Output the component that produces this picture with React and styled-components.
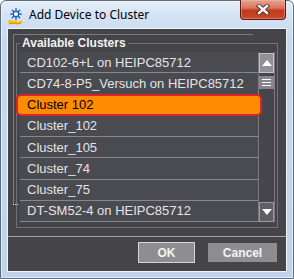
import React from "react";
import styled, { createGlobalStyle } from "styled-components";

const GlobalStyle = createGlobalStyle`
  html, body {
    margin: 0;
    padding: 0;
    background: #ffffff;
  }
  body {
    font-family: "Liberation Sans", Arial, sans-serif;
  }
`;

const Window = styled.div`
  box-sizing: border-box;
  width: 294px;
  height: 279px;
  display: flex;
  flex-direction: column;
  padding: 0 6px 6px 6px;
  border: 1px solid #5d6d80;
  border-radius: 6px 6px 0 0;
  background: linear-gradient(#e6eff9 0px, #d4e3f4 14px, #c6d9ef 40px, #bfd4ec 100%);
  box-shadow: inset 0 0 0 1px rgba(255, 255, 255, 0.55);
`;

const TitleBar = styled.div`
  height: 27px;
  display: flex;
  align-items: center;
`;

const AppIcon = styled.svg`
  width: 16px;
  height: 17px;
  margin-left: 1px;
  margin-top: 3px;
  flex: none;
`;

const Title = styled.div`
  margin-left: 5px;
  font-family: "Noto Sans", "Liberation Sans", sans-serif;
  font-size: 12px;
  color: #000;
  flex: 1;
`;

const CloseButton = styled.div`
  box-sizing: border-box;
  align-self: flex-start;
  margin-top: -1px;
  margin-right: 1px;
  width: 46px;
  height: 20px;
  border: 1px solid #5e1a10;
  border-top: none;
  border-radius: 0 0 4px 4px;
  background: linear-gradient(#e6a293 0%, #d8765f 42%, #c2391d 55%, #c54a2c 100%);
  box-shadow: inset 0 0 0 1px rgba(255, 200, 185, 0.35);
  display: flex;
  align-items: center;
  justify-content: center;
`;

const Client = styled.div`
  flex: 1;
  display: flex;
  flex-direction: column;
  background: #444449;
  border: 1px solid #eef4fb;
`;

const Panel = styled.div`
  position: relative;
  height: 207px;
  border-bottom: 1px solid #a3a3a9;
  display: flex;
  flex-direction: column;

  &::before {
    content: "";
    position: absolute;
    left: 5px;
    top: 5px;
    width: 239px;
    height: 170px;
    border-top: 1px solid #7a7a82;
    border-left: 1px solid #7a7a82;
  }
  &::after {
    content: "";
    position: absolute;
    left: 5px;
    top: 175px;
    width: 5px;
    height: 1px;
    border-top: 1px dotted #e0e0e0;
  }
`;

const Group = styled.fieldset`
  margin: 7px 8px 8px 8px;
  padding: 2px 2px 5px 3px;
  border: 1px solid #707078;
  min-width: 0;
  position: relative;
  z-index: 1;
`;

const Legend = styled.legend`
  padding: 0 2px;
  margin: 0;
  font-weight: bold;
  font-size: 12px;
  line-height: 14px;
  color: #f2f2f2;
`;

const ListBox = styled.div`
  height: 170px;
  display: flex;
`;

const Rows = styled.div`
  flex: 1;
  display: flex;
  flex-direction: column;
`;

const Row = styled.div`
  box-sizing: border-box;
  height: 21.25px;
  padding-left: 7px;
  display: flex;
  align-items: center;
  font-size: 13px;
  color: ${({ $selected }) => ($selected ? "#000" : "#e4e4e6")};
  background: #4a4a51;
  border-bottom: 1px solid #86868e;
  white-space: nowrap;
  position: relative;
  z-index: ${({ $selected }) => ($selected ? 2 : "auto")};

  ${({ $selected }) =>
    $selected &&
    `
    &::before {
      content: "";
      position: absolute;
      inset: -1px -4px -1px -4px;
      border: 2px solid #d8222c;
      border-radius: 5px;
      background: #ff8c00;
      z-index: -1;
    }
  `}
`;

const ScrollBar = styled.div`
  box-sizing: border-box;
  width: 17px;
  border-left: 1px solid #7a7a82;
  border-right: 1px solid #7a7a82;
  display: flex;
  flex-direction: column;
  background: #45454b;
`;

const ScrollButton = styled.div`
  box-sizing: border-box;
  height: 20px;
  margin-top: ${({ $down }) => ($down ? "auto" : "1px")};
  background: ${({ $down }) => ($down ? "#5e5e64" : "#909096")};
  border: 1px solid ${({ $down }) => ($down ? "#98989e" : "#c4c4ca")};
  display: flex;
  align-items: center;
  justify-content: center;
`;

const Arrow = styled.div`
  width: 0;
  height: 0;
  border-left: 5px solid transparent;
  border-right: 5px solid transparent;
  ${({ $down }) =>
    $down ? "border-top: 6px solid #ffffff;" : "border-bottom: 6px solid #ffffff;"}
`;

const Thumb = styled.div`
  box-sizing: border-box;
  height: 13px;
  margin: 3px 0 0 0;
  background: #86868c;
  display: flex;
  flex-direction: column;
  justify-content: center;
  gap: 2px;
  padding: 0 3px;
`;

const Grip = styled.div`
  height: 1px;
  background: #ffffff;
`;

const Footer = styled.div`
  flex: 1;
  display: flex;
  justify-content: flex-end;
  align-items: flex-start;
  gap: 14px;
  padding: 6px 9px 0 0;
`;

const DialogButton = styled.div`
  box-sizing: border-box;
  width: ${({ $w }) => $w}px;
  height: 19px;
  background: #8e8e92;
  color: #f4f4f4;
  font-weight: bold;
  font-size: 12px;
  display: flex;
  align-items: center;
  justify-content: center;
  outline: ${({ $focused }) => ($focused ? "1px solid #d6d6d8" : "none")};
`;

const items = [
  "CD102-6+L on HEIPC85712",
  "CD74-8-P5_Versuch on HEIPC85712",
  "Cluster 102",
  "Cluster_102",
  "Cluster_105",
  "Cluster_74",
  "Cluster_75",
  "DT-SM52-4 on HEIPC85712",
];

export default function App() {
  return (
    <>
      <GlobalStyle />
      <Window>
        <TitleBar>
          <AppIcon viewBox="0 0 16 17">
            <g stroke="#1f63cf" strokeWidth="1.5" strokeLinecap="round">
              <line x1="8" y1="0.8" x2="8" y2="11.2" />
              <line x1="2.8" y1="6" x2="13.2" y2="6" />
              <line x1="4.3" y1="2.3" x2="11.7" y2="9.7" />
              <line x1="11.7" y1="2.3" x2="4.3" y2="9.7" />
            </g>
            <circle cx="8" cy="6" r="2.6" fill="#ffffff" stroke="#1a56b8" strokeWidth="1.1" />
            <path d="M0 13 L3 11.5 L5 13.5 L8 12 L10 14 L13 12.5 L15 14 L13 16 L1 16 Z" fill="#f5c400" />
            <path d="M1 16 L5 15 L9 16 L13 15" stroke="#e08a00" strokeWidth="1" fill="none" />
          </AppIcon>
          <Title>Add Device to Cluster</Title>
          <CloseButton>
            <svg width="14" height="11" viewBox="0 0 14 11">
              <path d="M3 2 L11 9 M11 2 L3 9" stroke="#4a2a26" strokeWidth="4.2" strokeLinecap="square" />
              <path d="M3 2 L11 9 M11 2 L3 9" stroke="#ffffff" strokeWidth="2.4" strokeLinecap="square" />
            </svg>
          </CloseButton>
        </TitleBar>
        <Client>
          <Panel>
            <Group>
              <Legend>Available Clusters</Legend>
              <ListBox>
                <Rows>
                  {items.map((item, i) => (
                    <Row key={item + i} $selected={i === 2}>
                      {item}
                    </Row>
                  ))}
                </Rows>
                <ScrollBar>
                  <ScrollButton>
                    <Arrow />
                  </ScrollButton>
                  <Thumb>
                    <Grip />
                    <Grip />
                    <Grip />
                  </Thumb>
                  <ScrollButton $down>
                    <Arrow $down />
                  </ScrollButton>
                </ScrollBar>
              </ListBox>
            </Group>
          </Panel>
          <Footer>
            <DialogButton $w={55} $focused>
              OK
            </DialogButton>
            <DialogButton $w={69}>Cancel</DialogButton>
          </Footer>
        </Client>
      </Window>
    </>
  );
}
